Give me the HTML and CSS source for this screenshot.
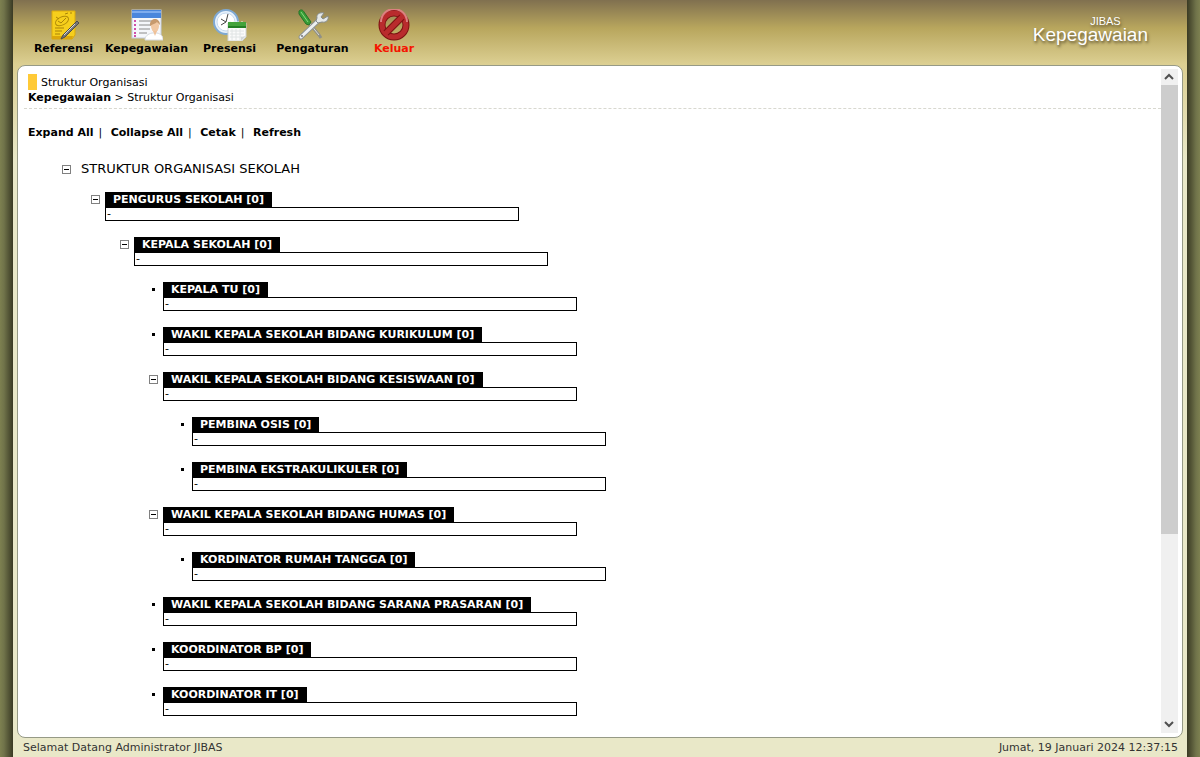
FILE: index.html
```
<!DOCTYPE html>
<html lang="id">
<head>
  <meta charset="UTF-8" />
  <meta name="viewport" content="width=device-width, initial-scale=1.0" />
  <title>JIBAS Kepegawaian</title>
  <link rel="stylesheet" href="styles.css">
</head>
<body>
  <div class="frame">
    <header class="topbar">
      <nav class="menu">
        <a href="#">
          <svg width="32" height="32" viewBox="0 0 32 32">
            <path d="M4 2h23v24l-3 4H4z" fill="#f6cf1c" stroke="#d9a90c"/>
            <path d="M4 27h21l-1 3H4z" fill="#dba70b"/>
            <ellipse cx="14" cy="12" rx="7" ry="4" transform="rotate(-25 14 12)" fill="none" stroke="#b28d08"/>
            <path d="M8 8l3 2M10 12l3 2 5-5M17 5l3-1M22 4h2M7 19h9M7 22h7M7 25h5" fill="none" stroke="#a88208"/>
            <path d="M29 12l2 2-14 14-4 2 2-4z" fill="#777" stroke="#4c4c4c" stroke-width="1"/>
            <path d="M27 15L16 26" stroke="#d8d8d8"/>
          </svg>
          Referensi
        </a>
        <a href="#">
          <svg width="32" height="32" viewBox="0 0 32 32">
            <rect x="1" y="1" width="29" height="28" fill="#f5f7fb" stroke="#c4cde0"/>
            <rect x="1" y="1" width="29" height="8" fill="#4a86dc"/>
            <path d="M1 3h29" stroke="#7eacee" stroke-width="2"/>
            <path d="M3 12h2M3 16h2M3 20h2M3 24h2M3 27h2" stroke="#d04fa8" stroke-width="2"/>
            <path d="M8 12h18M8 16h12M8 20h11M8 24h8" stroke="#8a8a8a"/>
            <path d="M14 31c0-4 3-6 7-7h5c4 1 6 3 6 7z" fill="#fff" stroke="#d5d9df"/>
            <ellipse cx="24" cy="17" rx="4" ry="6" fill="#f1c8a3"/>
            <path d="M19 17c-1-9 10-9 10-1l-3-3c-2 2-4 2-7 4z" fill="#c79a6e"/>
            <path d="M22 22h4l-2 5z" fill="#efc199"/>
          </svg>
          Kepegawaian
        </a>
        <a href="#">
          <svg width="36" height="32" viewBox="0 0 36 32">
            <circle cx="14" cy="13" r="12" fill="#e8f2fc" stroke="#7fa9d3" stroke-width="2"/>
            <circle cx="14" cy="13" r="9" fill="#fff" stroke="#c5d9ee"/>
            <path d="M9 10l5 3 2-8M14 13l-5 3" fill="none" stroke="#444"/>
            <path d="M16 14h18v14l-4 4H16z" fill="#fbfbfb" stroke="#cfd3d3"/>
            <path d="M16 13h18v5H16z" fill="#43a33c"/>
            <path d="M16 18h18" stroke="#237f25" stroke-width="2"/>
            <path d="M18 13v-1M22 13v-1M26 13v-1M30 13v-1" stroke="#e8f5e4"/>
            <path d="M18 22h14M18 25h14M18 28h12M20 20v11M24 20v11M28 20v11" stroke="#e0e4e4"/>
            <path d="M34 27l-5 1v4z" fill="#d3d8d8"/>
          </svg>
          Presensi
        </a>
        <a href="#">
          <svg width="32" height="32" viewBox="0 0 32 32">
            <path d="M13 15l9 11 2 3" fill="none" stroke="#909087" stroke-width="3"/>
            <path d="M13 15l9 11" stroke="#dcdcd3"/>
            <path d="M2 2c2-2 4-1 5 1l7 10-2 3-3-1L2 5z" fill="#379d36" stroke="#257328"/>
            <path d="M4 3l7 10" stroke="#8cd57f"/>
            <path d="M4 28L22 11" stroke="#8d9292" stroke-width="5" stroke-linecap="round"/>
            <path d="M4 28L22 11" stroke="#edf0f0" stroke-width="3" stroke-linecap="round"/>
            <path d="M20 9c-1-4 3-6 7-5l-3 4 2 2 5-3c1 4-2 7-6 6l-4 1-2-2z" fill="#e5e8e8" stroke="#858b8b"/>
            <circle cx="5" cy="27" r="1" fill="#777"/>
          </svg>
          Pengaturan
        </a>
        <a href="#" class="logout">
          <svg width="32" height="32" viewBox="0 0 32 32">
            <circle cx="16" cy="16" r="12" fill="none" stroke="#7d1212" stroke-width="7"/>
            <circle cx="16" cy="16" r="12" fill="none" stroke="#b92b2d" stroke-width="5"/>
            <path d="M8 24L24 8" stroke="#7d1212" stroke-width="7"/>
            <path d="M7 25L25 7" stroke="#b92b2d" stroke-width="5"/>
            <path d="M3 13a13 13 0 0 1 26 0" fill="none" stroke="#dc8080" stroke-width="2"/>
          </svg>
          Keluar
        </a>
      </nav>
      <div class="brand">
        <span>JIBAS</span>
        <strong>Kepegawaian</strong>
      </div>
    </header>

    <main class="panel">
      <div class="content">
        <div class="heading">
          <h1>Struktur Organisasi</h1>
          <p><a href="#">Kepegawaian</a> &gt; Struktur Organisasi</p>
        </div>
        <div class="actions">
          <a href="#">Expand All</a>|
          <a href="#">Collapse All</a>|
          <a href="#">Cetak</a>|
          <a href="#">Refresh</a>
        </div>

        <ul class="tree">
          <li>
            <button class="toggle" aria-label="Tutup"></button>
            <span class="root">STRUKTUR ORGANISASI SEKOLAH</span>
            <ul>
              <li>
                <button class="toggle" aria-label="Tutup"></button>
                <div class="node"><b>PENGURUS SEKOLAH [0]</b><p>-</p></div>
                <ul>
                  <li>
                    <button class="toggle" aria-label="Tutup"></button>
                    <div class="node"><b>KEPALA SEKOLAH [0]</b><p>-</p></div>
                    <ul>
                      <li>
                        <i class="dot"></i>
                        <div class="node"><b>KEPALA TU [0]</b><p>-</p></div>
                      </li>
                      <li>
                        <i class="dot"></i>
                        <div class="node"><b>WAKIL KEPALA SEKOLAH BIDANG KURIKULUM [0]</b><p>-</p></div>
                      </li>
                      <li>
                        <button class="toggle" aria-label="Tutup"></button>
                        <div class="node"><b>WAKIL KEPALA SEKOLAH BIDANG KESISWAAN [0]</b><p>-</p></div>
                        <ul>
                          <li>
                            <i class="dot"></i>
                            <div class="node"><b>PEMBINA OSIS [0]</b><p>-</p></div>
                          </li>
                          <li>
                            <i class="dot"></i>
                            <div class="node"><b>PEMBINA EKSTRAKULIKULER [0]</b><p>-</p></div>
                          </li>
                        </ul>
                      </li>
                      <li>
                        <button class="toggle" aria-label="Tutup"></button>
                        <div class="node"><b>WAKIL KEPALA SEKOLAH BIDANG HUMAS [0]</b><p>-</p></div>
                        <ul>
                          <li>
                            <i class="dot"></i>
                            <div class="node"><b>KORDINATOR RUMAH TANGGA [0]</b><p>-</p></div>
                          </li>
                        </ul>
                      </li>
                      <li>
                        <i class="dot"></i>
                        <div class="node"><b>WAKIL KEPALA SEKOLAH BIDANG SARANA PRASARAN [0]</b><p>-</p></div>
                      </li>
                      <li>
                        <i class="dot"></i>
                        <div class="node"><b>KOORDINATOR BP [0]</b><p>-</p></div>
                      </li>
                      <li>
                        <i class="dot"></i>
                        <div class="node"><b>KOORDINATOR IT [0]</b><p>-</p></div>
                      </li>
                    </ul>
                  </li>
                </ul>
              </li>
            </ul>
          </li>
        </ul>
      </div>

      <div class="scrollbar" aria-hidden="true">
        <svg width="17" height="16" viewBox="0 0 17 16"><path d="M4 10l4-4 4 4" /></svg>
        <div class="track"><div class="thumb"></div></div>
        <svg width="17" height="16" viewBox="0 0 17 16"><path d="M4 5l4 4 4-4" /></svg>
      </div>
    </main>

    <footer class="statusbar">
      <span>Selamat Datang Administrator JIBAS</span>
      <span>Jumat, 19 Januari 2024 12:37:15</span>
    </footer>
  </div>
</body>
</html>
```
FILE: styles.css
```
* {
  box-sizing: border-box;
}

body {
  margin: 0;
  padding: 0 13px;
  height: 100vh;
  overflow: hidden;
  background: linear-gradient(to right, #7d8050, #70734a 4px, #3a3a24 13px, #3a3a24 calc(100% - 13px), #70734a calc(100% - 4px), #7d8050);
  font-family: Verdana, "DejaVu Sans", sans-serif;
  font-size: 11px;
  color: #000;
}

a {
  color: #000;
  font-weight: bold;
  text-decoration: none;
}

.frame {
  height: 100%;
  display: flex;
  flex-direction: column;
  padding: 0 4px;
  background: linear-gradient(#80704f, #b8a65d 28px, #dccf92 64px, #e9e8c8 160px, #e9e8c8);
}

.topbar {
  flex: none;
  height: 65px;
  display: flex;
  justify-content: space-between;
}

.menu {
  display: flex;
  padding: 9px 0 0 5px;
}

.menu a {
  width: 83px;
  display: flex;
  flex-direction: column;
  align-items: center;
  line-height: 16px;
}

.menu .logout {
  width: 80px;
  color: #f51400;
}

.brand {
  padding: 16px 35px 0 0;
  color: #fff;
  text-align: center;
  font-family: "Liberation Sans", Arial, sans-serif;
  text-shadow: 1px 2px 3px #5b5030;
}

.brand span {
  display: block;
  padding-left: 30px;
  font-size: 11px;
  line-height: 11px;
}

.brand strong {
  display: block;
  font-size: 19px;
  line-height: 15px;
  font-weight: normal;
}

.panel {
  flex: 1;
  min-height: 0;
  display: flex;
  padding: 3px 4px 4px 6px;
  background: #fff;
  border: 1px solid #969a86;
  border-radius: 8px;
}

.content {
  flex: 1;
  overflow: hidden;
}

.heading {
  padding: 5px 0 4px 4px;
  border-bottom: 1px dashed #d8d8d0;
}

.heading h1 {
  margin: 0;
  font-size: 11px;
  line-height: 18px;
  font-weight: normal;
}

.heading h1::before {
  content: "";
  display: inline-block;
  width: 9px;
  height: 16px;
  margin-right: 4px;
  vertical-align: top;
  background: #ffca37;
}

.heading p {
  margin: 0;
  line-height: 12px;
}

.actions {
  padding: 17px 4px 0;
  line-height: 14px;
}

.actions a {
  margin-right: 5px;
}

.actions a + a {
  margin-left: 5px;
}

.tree,
.tree ul {
  margin: 0;
  padding: 0;
  list-style: none;
}

.tree {
  padding: 22px 0 0 38px;
}

.tree li {
  display: grid;
  grid-template-columns: 14px 1fr;
}

.tree ul {
  grid-column: 1 / 3;
  padding: 16px 0 0 29px;
}

.tree ul li + li {
  margin-top: 16px;
}

.toggle {
  width: 9px;
  height: 9px;
  margin: 3px 0 0;
  padding: 0 1px;
  background: #fff;
  border: 1px solid #808080;
}

.toggle::before {
  content: "";
  display: block;
  height: 1px;
  background: #000;
}

.dot {
  width: 3px;
  height: 3px;
  margin: 6px 0 0 3px;
  background: #000;
}

.root {
  padding-left: 5px;
  font-size: 13px;
  line-height: 14px;
}

.node b {
  display: inline-block;
  padding: 0 8px;
  line-height: 15px;
  vertical-align: top;
  background: #000;
  color: #fff;
}

.node p {
  width: 414px;
  height: 14px;
  margin: 0;
  padding-left: 1px;
  line-height: 12px;
  border: 1px solid #000;
}

.scrollbar {
  flex: none;
  width: 17px;
  display: flex;
  flex-direction: column;
  background: #f0f0f0;
}

.scrollbar path {
  fill: none;
  stroke: #505050;
  stroke-width: 2;
}

.track {
  flex: 1;
}

.thumb {
  height: 71%;
  background: #cdcdcd;
}

.statusbar {
  flex: none;
  display: flex;
  justify-content: space-between;
  padding: 3px 5px 2px 6px;
  font-size: 11px;
  line-height: 14px;
  color: #333;
}
```
